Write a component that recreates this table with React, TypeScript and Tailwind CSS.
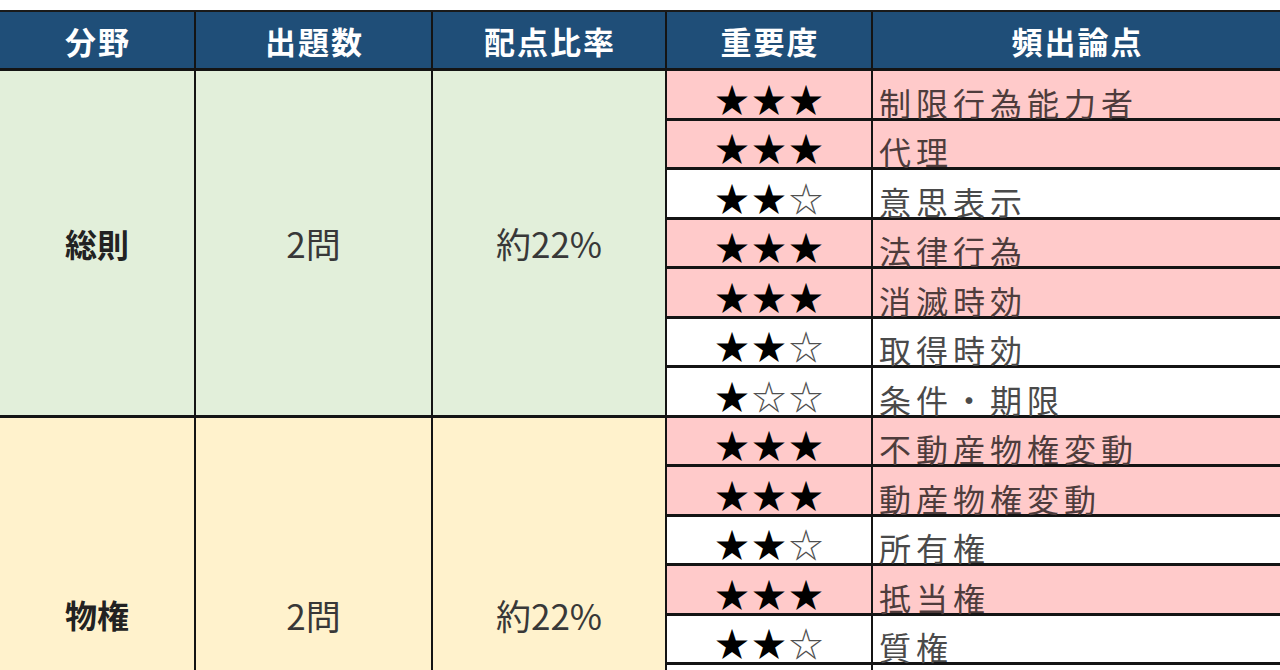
import React from "react";

type Topic = { stars: string; name: string; hot: boolean };
type Section = { field: string; count: string; ratio: string; bg: string; topics: Topic[] };

const sections: Section[] = [
  {
    field: "総則",
    count: "2問",
    ratio: "約22%",
    bg: "bg-[#e2efda]",
    topics: [
      { stars: "★★★", name: "制限行為能力者", hot: true },
      { stars: "★★★", name: "代理", hot: true },
      { stars: "★★☆", name: "意思表示", hot: false },
      { stars: "★★★", name: "法律行為", hot: true },
      { stars: "★★★", name: "消滅時効", hot: true },
      { stars: "★★☆", name: "取得時効", hot: false },
      { stars: "★☆☆", name: "条件・期限", hot: false },
    ],
  },
  {
    field: "物権",
    count: "2問",
    ratio: "約22%",
    bg: "bg-[#fff2cc]",
    topics: [
      { stars: "★★★", name: "不動産物権変動", hot: true },
      { stars: "★★★", name: "動産物権変動", hot: true },
      { stars: "★★☆", name: "所有権", hot: false },
      { stars: "★★★", name: "抵当権", hot: true },
      { stars: "★★☆", name: "質権", hot: false },
      // rows below the visible area
      { stars: "", name: "", hot: false },
      { stars: "", name: "", hot: false },
      { stars: "", name: "", hot: false },
    ],
  },
];

const headers = ["分野", "出題数", "配点比率", "重要度", "頻出論点"];

const rowSpan: Record<number, string> = {
  7: "row-span-7",
  8: "row-span-8",
};

function Stars({ value }: { value: string }) {
  return (
    <span className="pl-[3px] tracking-[3px]">
      {value.split("").map((c, i) => (
        <span key={i} className={c === "★" ? "text-black" : "text-[#505050]"}>
          {c}
        </span>
      ))}
    </span>
  );
}

export default function App() {
  return (
    <div
      className="h-[670px] w-[1280px] overflow-hidden bg-white pt-[10px]"
      style={{ fontFamily: '"Noto Sans CJK JP", "Noto Sans", sans-serif' }}
    >
      <div className="grid grid-cols-[194px_235px_232px_204px_1fr] grid-rows-[56px] auto-rows-[46.5px] gap-x-[2px] gap-y-[3px] border-t-2 border-[#1a1a1a] bg-[#141414]">
        {headers.map((h) => (
          <div
            key={h}
            className="flex items-center justify-center bg-[#1f4e78] pl-[2px] text-[31px] font-bold leading-none tracking-[2px] text-white"
          >
            {h}
          </div>
        ))}
        {sections.map((s) => (
          <React.Fragment key={s.field}>
            <div
              className={`${rowSpan[s.topics.length]} ${s.bg} flex items-center justify-center text-[32px] font-bold leading-none text-[#222]`}
            >
              {s.field}
            </div>
            <div
              className={`${rowSpan[s.topics.length]} ${s.bg} flex items-center justify-center text-[35px] leading-none text-[#383838]`}
            >
              {s.count}
            </div>
            <div
              className={`${rowSpan[s.topics.length]} ${s.bg} flex items-center justify-center text-[35px] leading-none text-[#383838]`}
            >
              {s.ratio}
            </div>
            {s.topics.map((t, i) => (
              <React.Fragment key={i}>
                <div
                  className={`${t.hot ? "bg-[#ffcaca]" : "bg-white"} flex items-end justify-center pb-[2px] text-[34px] leading-none`}
                >
                  <Stars value={t.stars} />
                </div>
                <div
                  className={`${t.hot ? "bg-[#ffcaca]" : "bg-white"} flex items-end whitespace-nowrap pl-[6px] text-[32px] leading-none tracking-[5px] ${t.hot ? "text-[#4e3c3c]" : "text-[#4a4a4a]"}`}
                >
                  {t.name}
                </div>
              </React.Fragment>
            ))}
          </React.Fragment>
        ))}
      </div>
    </div>
  );
}
